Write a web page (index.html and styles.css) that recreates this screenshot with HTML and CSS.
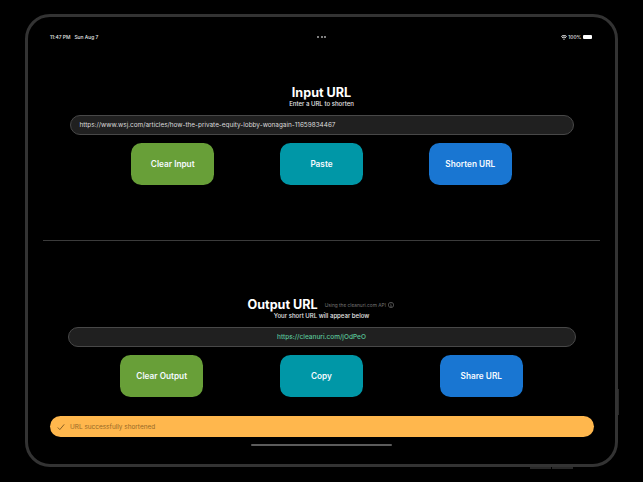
FILE: index.html
```html
<!DOCTYPE html>
<html lang="en">
<head>
<meta charset="utf-8">
<title>URL Shortener</title>
<link rel="stylesheet" href="styles.css">
</head>
<body>
<main class="device">
  <header class="status">
    <div class="status-left"><span>11:47 PM</span><span>Sun Aug 7</span></div>
    <div class="dots"><i></i><i></i><i></i></div>
    <div class="status-right">
      <svg class="wifi" viewBox="0 0 12 10"><path d="M6 10 4.2 7.8a2.7 2.7 0 0 1 3.6 0zM2.9 6.3 1.8 5a6.2 6.2 0 0 1 8.4 0L9.1 6.3a4.6 4.6 0 0 0-6.2 0zM1 4.1 0 2.8a9 9 0 0 1 12 0l-1 1.3a7.3 7.3 0 0 0-10 0z"/></svg>
      <span class="percent">100%</span>
      <span class="battery"></span>
    </div>
  </header>
  <section class="panel input-panel">
    <div class="heading"><h1>Input URL</h1></div>
    <p class="subtitle sub-input">Enter a URL to shorten</p>
    <div class="field"><span class="url">https://www.wsj.com/articles/how-the-private-equity-lobby-wonagain-11659834467</span></div>
    <div class="buttons">
      <button class="green"><span>Clear Input</span></button>
      <button class="teal"><span>Paste</span></button>
      <button class="blue"><span>Shorten URL</span></button>
    </div>
  </section>
  <hr>
  <section class="panel output-panel">
    <div class="heading"><h1>Output URL</h1>
      <span class="api">Using the cleanuri.com API</span>
      <svg class="info" viewBox="0 0 12 12"><circle cx="6" cy="6" r="5.3"/><path d="M6 2.8v1.3M4.9 5.3H6v3.4M4.7 8.8h2.6"/></svg>
    </div>
    <p class="subtitle sub-output">Your short URL will appear below</p>
    <div class="field"><span class="short">https://cleanuri.com/jOdPeO</span></div>
    <div class="buttons">
      <button class="green"><span>Clear Output</span></button>
      <button class="teal"><span>Copy</span></button>
      <button class="blue"><span>Share URL</span></button>
    </div>
  </section>
  <div class="toast">
    <svg class="check" viewBox="0 0 8 8"><path d="M.8 4.5 2.8 6.6 7.2 1.4"/></svg>
    <span>URL successfully shortened</span>
  </div>
  <div class="home"></div>
  <i class="side-button power"></i>
  <i class="side-button volume-up"></i>
  <i class="side-button volume-down"></i>
</main>
</body>
</html>
```
FILE: styles.css
```css
* { box-sizing: border-box; }
html, body { margin: 0; height: 100%; background: #000; overflow: hidden; }
body { padding: 14px 25px; font-family: Inter, "Liberation Sans", sans-serif; color: #fff; }
.device {
  position: relative; width: 593px; height: 453px;
  border: 3px solid #333; border-radius: 25px;
  display: flex; flex-direction: column; align-items: center;
}
.status {
  width: 543px; height: 10px; margin-top: 15px;
  display: grid; grid-template-columns: 1fr auto 1fr; align-items: center;
  font-size: 4.9px; font-weight: 500; line-height: 10px; color: #e6e6e6; white-space: nowrap;
}
.status-left { display: flex; gap: 4px; }
.dots { display: flex; gap: 1.4px; }
.dots i { width: 2px; height: 2px; border-radius: 50%; background: #aaa; }
.status-right { display: flex; justify-content: flex-end; align-items: center; gap: 1.7px; }
.wifi { width: 6px; height: 5px; fill: #eee; }
.percent { font-size: 4.8px; }
.battery { width: 9px; height: 4px; margin-right: 1px; border-radius: 1px; background: #fff; }
.panel { display: flex; flex-direction: column; align-items: center; }
.input-panel { width: 504px; height: 198px; padding-top: 42px; }
.output-panel { width: 508px; height: 175px; padding-top: 55px; }
.heading { display: flex; align-items: center; height: 17px; white-space: nowrap; }
h1 { margin: 0; font-size: 12.6px; line-height: 17px; font-weight: 700; }
.subtitle { margin: -1px 0 0; height: 8px; line-height: 8px; font-size: 6.05px; font-weight: 500; color: #e8e8e8; white-space: nowrap; }
.field {
  width: 100%; height: 20px; margin-top: 7px; padding: 0 9px;
  display: flex; align-items: center; background: #202020;
  border: 1px solid #484848; border-radius: 10px; white-space: nowrap;
}
.url { font-size: 6.4px; color: #dcdcdc; }
.buttons { display: flex; gap: 65.4px; margin-top: 8px; }
button {
  width: 83.4px; height: 42px; padding: 0; border: 0; border-radius: 10.5px;
  font: 600 8.25px/42px Inter, sans-serif; color: #f5faff;
}
.green { background: #689f38; }
.teal { background: #0097a7; }
.blue { background: #1976d2; }
hr { width: 557px; height: 1px; margin: 0; border: 0; background: #3b3b3b; }
.output-panel .heading { align-self: flex-start; margin-left: 180px; }
.output-panel .buttons { gap: 76.4px; margin-top: 7.6px; }
.output-panel .field { justify-content: center; }
.api { margin-left: 7px; font-size: 4.8px; color: #757575; }
.info { width: 6px; height: 6px; margin-left: 2.5px; fill: none; stroke: #909090; stroke-width: 1; }
.short { font-size: 6.5px; font-weight: 500; color: #5ac69a; }
.toast {
  width: 544px; height: 21px; border-radius: 10.5px; background: #ffb74d;
  display: flex; align-items: center; padding-left: 7px; color: #976a27; font-size: 6.45px; white-space: nowrap;
}
.check { width: 8px; height: 8px; margin-right: 5.5px; fill: none; stroke: #79551f; stroke-width: .9; }
.home { width: 141px; height: 2px; margin-top: 7px; border-radius: 1px; background: #5c5c5c; }
.side-button { position: absolute; background: #292929; }
.power { width: 1.3px; height: 26px; right: -4.3px; top: 372px; }
.volume-up, .volume-down { height: 2px; bottom: -5px; width: 21px; }
.volume-up { right: 64px; }
.volume-down { right: 42px; }
```
